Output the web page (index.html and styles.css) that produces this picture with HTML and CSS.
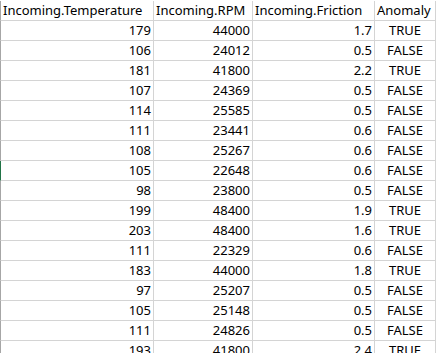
FILE: index.html
```html
<!DOCTYPE html>
<html>
<head>
<meta charset="utf-8">
<link rel="stylesheet" href="styles.css">
</head>
<body>
<div class="sheet">
  <div class="row head"><div class="c c1">Incoming.Temperature</div><div class="c c2">Incoming.RPM</div><div class="c c3">Incoming.Friction</div><div class="c c4">Anomaly</div></div>
  <div class="row"><div class="c c1">179</div><div class="c c2">44000</div><div class="c c3">1.7</div><div class="c c4">TRUE</div></div>
  <div class="row"><div class="c c1">106</div><div class="c c2">24012</div><div class="c c3">0.5</div><div class="c c4">FALSE</div></div>
  <div class="row"><div class="c c1">181</div><div class="c c2">41800</div><div class="c c3">2.2</div><div class="c c4">TRUE</div></div>
  <div class="row"><div class="c c1">107</div><div class="c c2">24369</div><div class="c c3">0.5</div><div class="c c4">FALSE</div></div>
  <div class="row"><div class="c c1">114</div><div class="c c2">25585</div><div class="c c3">0.5</div><div class="c c4">FALSE</div></div>
  <div class="row"><div class="c c1">111</div><div class="c c2">23441</div><div class="c c3">0.6</div><div class="c c4">FALSE</div></div>
  <div class="row"><div class="c c1">108</div><div class="c c2">25267</div><div class="c c3">0.6</div><div class="c c4">FALSE</div></div>
  <div class="row"><div class="c c1 sel">105</div><div class="c c2">22648</div><div class="c c3">0.6</div><div class="c c4">FALSE</div></div>
  <div class="row"><div class="c c1">98</div><div class="c c2">23800</div><div class="c c3">0.5</div><div class="c c4">FALSE</div></div>
  <div class="row"><div class="c c1">199</div><div class="c c2">48400</div><div class="c c3">1.9</div><div class="c c4">TRUE</div></div>
  <div class="row"><div class="c c1">203</div><div class="c c2">48400</div><div class="c c3">1.6</div><div class="c c4">TRUE</div></div>
  <div class="row"><div class="c c1">111</div><div class="c c2">22329</div><div class="c c3">0.6</div><div class="c c4">FALSE</div></div>
  <div class="row"><div class="c c1">183</div><div class="c c2">44000</div><div class="c c3">1.8</div><div class="c c4">TRUE</div></div>
  <div class="row"><div class="c c1">97</div><div class="c c2">25207</div><div class="c c3">0.5</div><div class="c c4">FALSE</div></div>
  <div class="row"><div class="c c1">105</div><div class="c c2">25148</div><div class="c c3">0.5</div><div class="c c4">FALSE</div></div>
  <div class="row"><div class="c c1">111</div><div class="c c2">24826</div><div class="c c3">0.5</div><div class="c c4">FALSE</div></div>
  <div class="row"><div class="c c1">193</div><div class="c c2">41800</div><div class="c c3">2.4</div><div class="c c4">TRUE</div></div>
</div>
</body>
</html>
```
FILE: styles.css
```css
html, body {
  margin: 0;
  padding: 0;
  background: #ffffff;
  overflow: hidden;
}
.sheet {
  margin-top: 1px;
  font-family: "Noto Sans", "Open Sans", sans-serif;
  font-size: 13px;
  color: #000000;
}
.row {
  display: grid;
  grid-template-columns: 154px 99px 122px 61px;
  height: 20px;
}
.c {
  box-sizing: border-box;
  height: 20px;
  border-bottom: 1px solid #d4d4d4;
  border-right: 1px solid #d4d4d4;
  line-height: 19px;
  padding: 0 2px;
  white-space: nowrap;
  overflow: hidden;
  text-align: right;
}
.c1 {
  border-left: 1px solid #a6a6a6;
}
.c1.sel {
  border-left-color: #217346;
}
.c4 {
  text-align: center;
}
.head .c {
  text-align: left;
}
```
